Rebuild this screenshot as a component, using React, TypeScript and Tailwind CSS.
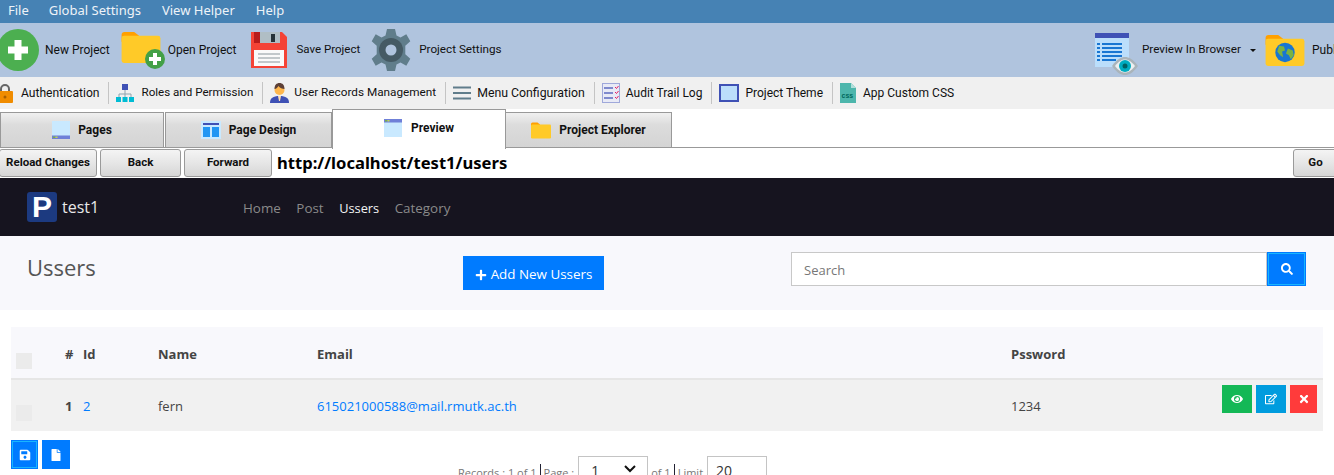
import React from 'react'
import { FaEye, FaFile, FaPlus, FaRegEdit, FaSave, FaSearch, FaTimes } from 'react-icons/fa'

const ui = "font-['Roboto',sans-serif]"
const web = "font-['Open_Sans',sans-serif]"

function Folder({ className = '', children }: { className?: string; children?: React.ReactNode }) {
  return (
    <svg viewBox="0 0 40 34" className={className}>
      <path d="M0 4a3 3 0 0 1 3-3h10l5 4v6H0z" fill="#ffa000" />
      <rect x="0" y="5" width="40" height="28" rx="2.5" fill="#ffca28" />
      {children}
    </svg>
  )
}

function PageIcon({ className = '', bottom = false }: { className?: string; bottom?: boolean }) {
  return (
    <svg viewBox="0 0 18 18" className={className}>
      <rect width="18" height="18" fill="#c9e9ff" />
      <rect y={bottom ? 14.5 : 0} width="18" height="3.5" fill="#6f80d8" />
      <rect x="1" y={bottom ? 15.5 : 1} width="2" height="1.5" fill="#7cb342" />
      <rect x="3.5" y={bottom ? 15.5 : 1} width="2" height="1.5" fill="#c6d64b" />
    </svg>
  )
}

function ToolItem({ label, icon, gap = 'ml-1.5', size = 'text-[12px]' }: { label: string; icon: React.ReactNode; gap?: string; size?: string }) {
  return (
    <div className="flex shrink-0 items-center">
      {icon}
      <span className={`${gap} ${size} whitespace-nowrap text-[#111]`}>{label}</span>
    </div>
  )
}

function Sep() {
  return <div className="mr-[7px] ml-[9px] h-[22px] w-px shrink-0 bg-[#c4c4c4]" />
}

function Tab({ label, icon, w, active }: { label: string; icon: React.ReactNode; w: string; active?: boolean }) {
  if (active) {
    return (
      <div className={`${w} relative z-10 -mb-0.5 flex h-10 items-center justify-center gap-[9px] border border-b-0 border-[#999] bg-white pb-1 text-[12px] font-bold text-[#111]`}>
        {icon}
        {label}
      </div>
    )
  }
  return (
    <div className={`${w} flex h-[35px] items-center justify-center gap-[8px] border border-b-0 border-[#999] bg-[linear-gradient(#f0f0f0,#dcdcdc_35%,#d4d4d4)] text-[12px] font-bold text-[#111]`}>
      {icon}
      {label}
    </div>
  )
}

function NavBtn({ label, w }: { label: string; w: string }) {
  return (
    <div className={`${w} flex h-[28px] shrink-0 items-center justify-center rounded-[3px] border border-[#9a9a9a] bg-[linear-gradient(#f4f4f4,#e6e6e6_50%,#d6d6d6)] text-[11.500px] font-bold text-[#111]`}>
      {label}
    </div>
  )
}

function Check() {
  return <div className="h-4 w-4 bg-[#ebebeb]" />
}

export default function App() {
  return (
    <div className={`${ui} flex h-[475px] w-[1334px] flex-col overflow-hidden bg-white`}>
      {/* menu */}
      <div className="flex h-[23px] shrink-0 items-center gap-[21px] bg-[#4682b4] pb-[2px] pl-2 font-['Noto_Sans',sans-serif] text-[13px] text-[#eef3f8]">
        <span className="-mr-px">File</span>
        <span>Global Settings</span>
        <span>View Helper</span>
        <span>Help</span>
      </div>

      {/* main toolbar */}
      <div className="flex h-[54px] shrink-0 items-center bg-[#b0c4de]">
        <div className="flex w-[1095px] shrink-0 items-center">
          <ToolItem
            label="New Project"
            icon={
              <svg viewBox="0 0 42 42" className="-ml-[3px] h-[42px] w-[42px]">
                <circle cx="21" cy="21" r="21" fill="#4caf50" />
                <path d="M17.500 11h7v6.500h6.500v7h-6.500v6.500h-7v-6.500H11v-7h6.500z" fill="#fff" />
              </svg>
            }
          />
          <div className="ml-[11px]">
            <ToolItem
              label="Open Project"
              gap="ml-[3px]"
              icon={
                <div className="relative h-[38px] w-11">
                  <Folder className="h-[33px] w-10" />
                  <svg viewBox="0 0 20 20" className="absolute right-0 bottom-0 h-5 w-5">
                    <circle cx="10" cy="10" r="10" fill="#43a047" />
                    <path d="M8 4h4v4h4v4h-4v4H8v-4H4V8h4z" fill="#fff" />
                  </svg>
                </div>
              }
            />
          </div>
          <div className="ml-[14px]">
            <ToolItem
              label="Save Project"
              gap="ml-[10px]"
              size="text-[11.500px]"
              icon={
                <svg viewBox="0 0 36 36" className="h-9 w-9">
                  <path d="M0 0h31l5 5v31H0z" fill="#f44336" />
                  <rect x="3" y="0" width="26" height="11" fill="#b71c1c" />
                  <rect x="9" y="0" width="20" height="11" fill="#b0bec5" />
                  <rect x="20" y="2" width="4" height="8" fill="#263238" />
                  <rect x="3" y="18" width="30" height="16" fill="#fafafa" />
                  <path d="M7 22h22M7 26h22M7 30h22" stroke="#b0b8bc" strokeWidth="1.5" />
                </svg>
              }
            />
          </div>
          <div className="ml-[11px]">
            <ToolItem
              label="Project Settings"
              gap="ml-2"
              size="text-[11.700px]"
              icon={
                <svg viewBox="0 0 40 42" className="h-[42px] w-10">
                  <path
                    d="M16 0h8l1.500 6.500 4 2 5.800-3.200 4 7-5 4.400v8.600l5 4.400-4 7-5.800-3.200-4 2L24 42h-8l-1.500-6.500-4-2-5.800 3.200-4-7 5-4.400v-8.600l-5-4.400 4-7 5.800 3.200 4-2z"
                    fill="#607d8b"
                  />
                  <circle cx="20" cy="21" r="12" fill="#455a64" />
                  <circle cx="20" cy="21" r="5.500" fill="#b0c4de" />
                </svg>
              }
            />
          </div>
        </div>
        <div className="flex shrink-0 items-center">
          <ToolItem
            label="Preview In Browser"
            gap="ml-[5px]"
            size="text-[11.700px]"
            icon={
              <div className="relative mt-[8px] h-[42px] w-[42px]">
                <svg viewBox="0 0 34 34" className="h-[34px] w-[34px]">
                  <rect width="34" height="34" fill="#bbdefb" />
                  <rect width="34" height="5" fill="#3f51b5" />
                  <path d="M7 11h20M7 15h20M7 19h20M7 23h20M7 27h14" stroke="#1976d2" strokeWidth="2" />
                  <path d="M2 11h3M2 15h3M2 19h3M2 23h3M2 27h3" stroke="#1976d2" strokeWidth="2" />
                </svg>
                <svg viewBox="0 0 26 18" className="absolute right-[-1px] bottom-0 h-[18px] w-[26px]">
                  <path d="M0 9C5 2 9 0 13 0s8 2 13 9c-5 7-9 9-13 9S5 16 0 9z" fill="#a9b4ba" />
                  <path d="M3 9c4-5 7-6.500 10-6.500S19 4 23 9c-4 5-7 6.500-10 6.500S7 14 3 9z" fill="#eceff1" />
                  <circle cx="13" cy="9" r="6" fill="#00acc1" />
                  <circle cx="13" cy="9" r="2.500" fill="#006064" />
                </svg>
              </div>
            }
          />
          <div className="mr-[9px] ml-[9px] h-0 w-0 border-x-[3px] border-t-[3px] border-x-transparent border-t-[#111]" />
          <ToolItem
            label="Publish Project"
            gap="ml-[7px]"
            icon={
              <Folder className="h-[33px] w-10">
                <circle cx="20" cy="19" r="10" fill="#1976d2" />
                <path d="M14 12l5 1 1 4-3 1 1 6-3-2-3-4zM23 15l5 2 1 5-3 4-2-4-3-2z" fill="#7cb342" />
              </Folder>
            }
          />
        </div>
      </div>

      {/* secondary toolbar */}
      <div className="flex h-[32px] shrink-0 items-center bg-[#f0f0f0]">
        <ToolItem
          label="Authentication"
          gap="ml-[7px]"
          size="text-[12.100px]"
          icon={
            <svg viewBox="0 0 18 20" className="-ml-1 h-5 w-[18px]">
              <path d="M5 9V6a4 4 0 0 1 8 0v3" fill="none" stroke="#666" strokeWidth="2" />
              <rect x="1" y="8" width="16" height="12" rx="1" fill="#f08c00" />
              <circle cx="9" cy="14" r="1.500" fill="#a85f00" />
            </svg>
          }
        />
        <Sep />
        <ToolItem
          label="Roles and Permission"
          gap="ml-[7px]"
          size="text-[11.600px]"
          icon={
            <svg viewBox="0 0 18 18" className="h-[18px] w-[18px]">
              <rect x="6" y="0" width="6" height="6" fill="#3f51b5" />
              <path d="M9 6v4M3 13v-3h12v3M9 10v3" fill="none" stroke="#90a4ae" />
              <rect x="0" y="13" width="5" height="5" fill="#00bcd4" />
              <rect x="6.500" y="13" width="5" height="5" fill="#00bcd4" />
              <rect x="13" y="13" width="5" height="5" fill="#00bcd4" />
            </svg>
          }
        />
        <Sep />
        <ToolItem
          label="User Records Management"
          gap="ml-[5px]"
          size="text-[11.750px]"
          icon={
            <svg viewBox="0 0 19 20" className="h-5 w-[19px]">
              <path d="M0 20c0-5 3-7 9.500-7s9.500 2 9.500 7z" fill="#3f51b5" />
              <path d="M8 13h3l-1 5h-1z" fill="#ffe0b2" />
              <circle cx="9.500" cy="7" r="5" fill="#ffb74d" />
              <path d="M4.500 6c0-4 2-6 5-6s5 2 5 6c-2 0-5-1-6-3-1 1.500-2 3-4 3z" fill="#5d4037" />
            </svg>
          }
        />
        <Sep />
        <ToolItem
          label="Menu Configuration"
          size="text-[12.300px]"
          icon={
            <svg viewBox="0 0 18 14" className="h-[14px] w-[18px]">
              <path d="M0 1.500h18M0 7h18M0 12.500h18" stroke="#607d8b" strokeWidth="2" />
            </svg>
          }
        />
        <Sep />
        <ToolItem
          label="Audit Trail Log"
          icon={
            <svg viewBox="0 0 18 20" className="h-5 w-[18px]">
              <rect x="0.500" y="0.500" width="17" height="19" fill="#e8eaf6" stroke="#9fa8da" />
              <path d="M2 5h9M2 10h9M2 15h9" stroke="#5c6bc0" strokeWidth="1.500" />
              <path d="M13 4l1.500 1.500L16.500 3M13 9l1.500 1.500 2-2.500M13 14l1.500 1.500 2-2.500" fill="none" stroke="#e91e63" />
            </svg>
          }
        />
        <Sep />
        <ToolItem
          label="Project Theme"
          gap="ml-[6px]"
          icon={
            <svg viewBox="0 0 20 18" className="h-[18px] w-5">
              <rect x="1" y="1" width="18" height="16" fill="#bbdefb" stroke="#3f51b5" strokeWidth="2" />
            </svg>
          }
        />
        <Sep />
        <ToolItem
          label="App Custom CSS"
          gap="ml-[7px]"
          icon={
            <svg viewBox="0 0 16 20" className="h-5 w-4">
              <path d="M0 0h11l5 5v15H0z" fill="#4db6ac" />
              <path d="M11 0l5 5h-5z" fill="#b2dfdb" />
              <text x="1.500" y="15" fontSize="7" fontWeight="700" fill="#00695c" fontFamily="Liberation Sans, sans-serif">css</text>
            </svg>
          }
        />
      </div>

      {/* tabs */}
      <div className="flex h-[38px] shrink-0 items-end bg-white">
        <Tab label="Pages" w="mr-px w-[164px]" icon={<PageIcon bottom className="h-[18px] w-[18px]" />} />
        <Tab
          label="Page Design"
          w="w-[167px]"
          icon={
            <svg viewBox="0 0 20 18" className="h-[18px] w-5">
              <rect width="20" height="18" fill="#c9e9ff" />
              <rect x="2" y="2" width="16" height="2" fill="#3f51b5" />
              <rect x="2" y="6" width="7" height="10" fill="#2196f3" />
              <rect x="11" y="6" width="7" height="10" fill="#2196f3" />
            </svg>
          }
        />
        <Tab label="Preview" w="w-[174px]" active icon={<PageIcon className="h-[18px] w-[18px]" />} />
        <Tab label="Project Explorer" w="-ml-px w-[167px]" icon={<Folder className="h-[17px] w-5" />} />
      </div>
      <div className="h-[2px] shrink-0 border-t border-[#999]" />

      {/* address bar */}
      <div className="flex h-[29px] shrink-0 items-start bg-white">
        <div className="-ml-px flex gap-[3px]">
          <NavBtn label="Reload Changes" w="w-[98px]" />
          <NavBtn label="Back" w="w-[81px]" />
          <NavBtn label="Forward" w="w-[88px]" />
        </div>
        <div className="ml-[5px] flex-1 font-['Noto_Sans',sans-serif] text-[16.600px] leading-[28px] font-bold text-black">http://localhost/test1/users</div>
        <div className="-mr-1">
          <NavBtn label="Go" w="w-[45px]" />
        </div>
      </div>

      {/* preview page */}
      <div className={`${web} flex flex-1 flex-col`}>
        <div className="flex h-[58px] shrink-0 items-center bg-[#16141f] pl-[27px]">
          <div className="flex w-[216px] items-center">
            <div className="flex h-[30px] w-[30px] items-center justify-center rounded-[3px] bg-[#1c3a80] font-['Liberation_Sans',sans-serif] text-[30px] leading-none font-bold text-white">P</div>
            <span className="mb-px ml-[5px] text-[16px] text-[#e8e8e8]">test1</span>
          </div>
          <div className="mt-[2px] flex gap-[15.500px] text-[13.400px] text-[#8a8a8a]">
            <span>Home</span>
            <span>Post</span>
            <span className="text-[12.800px] leading-[20px] text-[#f4f4f4]">Ussers</span>
            <span>Category</span>
          </div>
        </div>

        <div className="flex h-[74px] shrink-0 bg-[#f8f8fc] pt-4">
          <h1 className="-mt-px w-[463px] pl-[27px] text-[22px] text-[#555]">Ussers</h1>
          <div className="mt-1 flex h-[34px] w-[141px] items-center justify-center gap-1 bg-[#007bff] pt-[3px] text-[13.400px] text-white">
            <FaPlus className="h-3 w-3" />
            Add New Ussers
          </div>
          <div className="ml-[187px] flex h-[34px] w-[515px]">
            <div className="flex flex-1 items-center border border-[#c8c8c8] bg-white pt-[3px] pl-3 text-[13px] text-[#777]">Search</div>
            <div className="flex w-[39px] items-center justify-center border border-[#007bff] bg-[#007bff] text-white shadow-[inset_0_0_0_1px_#19b5fe]">
              <FaSearch className="h-3 w-3" />
            </div>
          </div>
        </div>

        <div className="mx-[11px] mt-[17px] shrink-0 text-[13px]">
          <div className="grid h-[53px] grid-cols-[54px_18px_75px_159px_694px_1fr] border-b-2 border-[#e6e6e6] bg-[#f8f8fc] font-bold text-[#444]">
            <div className="pt-[26px] pl-[5px]"><Check /></div>
            <div className="pt-[18px]">#</div>
            <div className="pt-[18px]">Id</div>
            <div className="pt-[18px]">Name</div>
            <div className="pt-[18px]">Email</div>
            <div className="pt-[18px]">Pssword</div>
          </div>
          <div className="grid h-[51px] grid-cols-[54px_18px_75px_159px_694px_1fr] bg-[#f1f1f1] text-[#444]">
            <div className="pt-[25px] pl-[5px]"><Check /></div>
            <div className="pt-[17px] font-bold">1</div>
            <div className="pt-[17px] text-[#007bff]">2</div>
            <div className="pt-[17px]">fern</div>
            <div className="pt-[17px] text-[#007bff]">615021000588@mail.rmutk.ac.th</div>
            <div className="flex justify-between pt-[17px] pr-[5px]">
              <span>1234</span>
              <div className="-mt-3 flex h-7 gap-1 pr-px text-white">
                <div className="flex w-[30px] items-center justify-center bg-[#14b856]"><FaEye className="h-3 w-3" /></div>
                <div className="flex w-[30px] items-center justify-center bg-[#009cde]"><FaRegEdit className="h-3 w-3" /></div>
                <div className="flex w-[27px] items-center justify-center bg-[#ff3b3b]"><FaTimes className="h-3 w-3" /></div>
              </div>
            </div>
          </div>
        </div>

        <div className="relative mx-[11px] mt-[9px] flex gap-[4px] text-white">
          <div className="flex h-[29px] w-[27px] items-center justify-center border border-[#007bff] bg-[#007bff] shadow-[inset_0_0_0_1px_#19b5fe]"><FaSave className="h-[12px] w-[12px]" /></div>
          <div className="flex h-[29px] w-[28px] items-center justify-center bg-[#007bff]"><FaFile className="h-[12px] w-[12px]" /></div>
          <div className="absolute top-4 left-[447px] flex items-start text-[11px] whitespace-nowrap text-[#777]">
            <span className="mt-[9px]">Records : 1 of 1</span>
            <span className="mx-[3px] mt-[8px] h-3 w-px bg-[#223]" />
            <span className="mt-[9px]">Page :</span>
            <div className="ml-1 flex h-10 w-[70px] items-start justify-between border border-[#c4c4c4] bg-white pt-[3px] pr-[11px] pl-3 text-[14px] text-[#333]">
              1
              <svg viewBox="0 0 12 8" className="mt-[5px] h-2 w-3"><path d="M1 1l5 5 5-5" fill="none" stroke="#111" strokeWidth="2" /></svg>
            </div>
            <span className="mt-[9px] ml-[3px]">of 1</span>
            <span className="mx-[3px] mt-[8px] h-3 w-px bg-[#223]" />
            <span className="mt-[9px]">Limit</span>
            <div className="ml-1 h-10 w-[60px] border border-[#c4c4c4] bg-white pt-[3px] pl-[8px] text-[14px] text-[#333]">20</div>
          </div>
        </div>
      </div>
    </div>
  )
}
